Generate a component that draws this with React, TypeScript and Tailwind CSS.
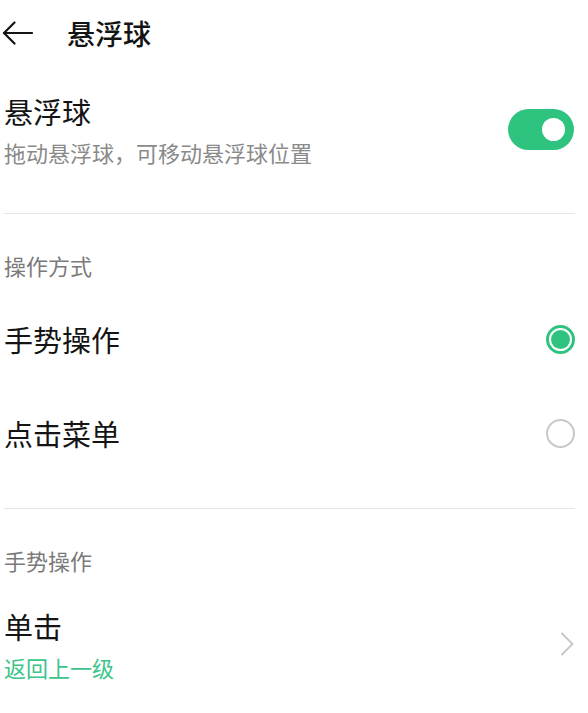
import React from "react";

function Radio({ checked }: { checked: boolean }) {
  if (checked) {
    return (
      <div className="w-[29px] h-[29px] rounded-full border-[3px] border-[#2ec47f] flex items-center justify-center">
        <div className="w-[19px] h-[19px] rounded-full bg-[#2ec47f]" />
      </div>
    );
  }
  return <div className="w-[29px] h-[29px] rounded-full border-2 border-[#c9c9c9]" />;
}

export default function App() {
  return (
    <div className="w-[588px] h-[713px] bg-white overflow-hidden text-[#141414] font-['Noto_Sans_CJK_SC','Noto_Sans',sans-serif]">
      {/* Header */}
      <div className="flex items-center h-[66px] pl-[2px]">
        <svg width="31" height="24" viewBox="0 0 31 24" fill="none" stroke="#141414" strokeWidth="2.2" strokeLinecap="round" strokeLinejoin="round">
          <path d="M30 12H2" />
          <path d="M12.5 1.5L2 12l10.5 10.5" />
        </svg>
        <div className="ml-[34px] text-[28px] leading-[40px] font-medium">悬浮球</div>
      </div>

      {/* Floating ball toggle */}
      <div className="flex items-center justify-between pl-[4px] pr-[14px] pt-[25px] pb-[46px]">
        <div className="flex flex-col">
          <div className="text-[29px] leading-[40px]">悬浮球</div>
          <div className="mt-[6px] text-[22px] leading-[30px] text-[#8a8a8a]">拖动悬浮球，可移动悬浮球位置</div>
        </div>
        <div className="w-[66px] h-[41px] rounded-full bg-[#2ec47f] flex items-center justify-end pr-[9px]">
          <div className="w-[23px] h-[23px] rounded-full bg-white" />
        </div>
      </div>

      <div className="h-px bg-[#e6e6e6] ml-[4px] mr-[13px]" />

      {/* Operation mode */}
      <div className="mt-[36px] pl-[4px] text-[22px] leading-[30px] text-[#7a7a7a]">操作方式</div>
      <div className="mt-[12px] flex items-center justify-between h-[94px] pl-[4px] pr-[13px]">
        <div className="text-[29px] leading-[40px]">手势操作</div>
        <Radio checked />
      </div>
      <div className="flex items-center justify-between h-[94px] pl-[4px] pr-[13px]">
        <div className="text-[29px] leading-[40px]">点击菜单</div>
        <Radio checked={false} />
      </div>

      <div className="mt-[28px] h-px bg-[#e6e6e6] ml-[4px] mr-[13px]" />

      {/* Gesture operation */}
      <div className="mt-[36px] pl-[4px] text-[22px] leading-[30px] text-[#7a7a7a]">手势操作</div>
      <div className="mt-[31px] flex items-center justify-between pl-[4px] pr-[13px]">
        <div className="flex flex-col">
          <div className="text-[29px] leading-[40px]">单击</div>
          <div className="mt-[6px] text-[22px] leading-[30px] text-[#3cc48a]">返回上一级</div>
        </div>
        <svg width="16" height="26" viewBox="0 0 16 26" fill="none" stroke="#c8c8c8" strokeWidth="2" strokeLinecap="round" strokeLinejoin="round">
          <path d="M3 2.5L13.5 13L3 23.5" />
        </svg>
      </div>
    </div>
  );
}
